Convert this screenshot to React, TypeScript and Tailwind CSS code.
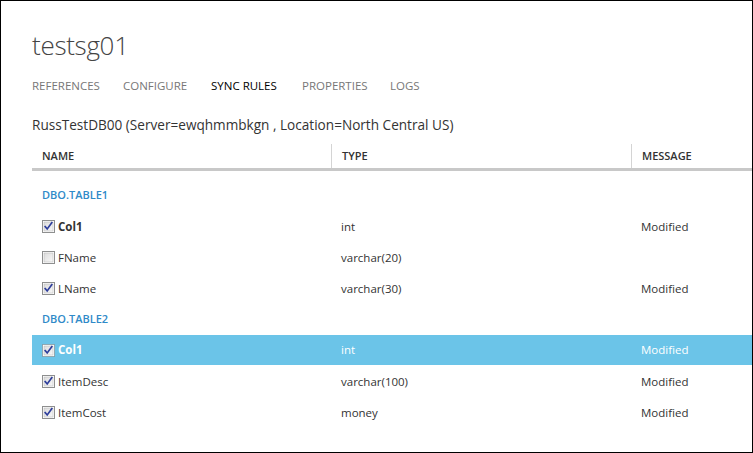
import React from "react";

type Row =
  | { kind: "section"; label: string }
  | { kind: "col"; name: string; type: string; msg: string; checked: boolean; bold?: boolean; selected?: boolean };

const rows: Row[] = [
  { kind: "section", label: "DBO.TABLE1" },
  { kind: "col", name: "Col1", type: "int", msg: "Modified", checked: true, bold: true },
  { kind: "col", name: "FName", type: "varchar(20)", msg: "", checked: false },
  { kind: "col", name: "LName", type: "varchar(30)", msg: "Modified", checked: true },
  { kind: "section", label: "DBO.TABLE2" },
  { kind: "col", name: "Col1", type: "int", msg: "Modified", checked: true, bold: true, selected: true },
  { kind: "col", name: "ItemDesc", type: "varchar(100)", msg: "Modified", checked: true },
  { kind: "col", name: "ItemCost", type: "money", msg: "Modified", checked: true },
];

function Check({ checked, selected }: { checked: boolean; selected?: boolean }) {
  return (
    <svg width="13" height="13" viewBox="0 0 13 13" className="shrink-0">
      <defs>
        <linearGradient id="cbg" x1="0" y1="0" x2="1" y2="1">
          <stop offset="0" stopColor="#dcdcdc" />
          <stop offset="1" stopColor="#f8f8f8" />
        </linearGradient>
      </defs>
      <rect x="0.5" y="0.5" width="12" height="12" fill="#fff" stroke={selected ? "#6f6f6f" : "#8e8f8f"} strokeDasharray={selected ? "1 1" : undefined} />
      <rect x="2" y="2" width="9" height="9" fill="url(#cbg)" stroke="#b5b5b5" strokeWidth="0.5" />
      {checked && (
        <path d="M3.2 6.6 L5.2 9 L9.8 2.8" fill="none" stroke="#2f3f9c" strokeWidth="1.7" strokeLinecap="square" />
      )}
    </svg>
  );
}

export default function App() {
  const font = { fontFamily: '"Open Sans", "Noto Sans", sans-serif' };
  return (
    <div className="w-[753px] h-[453px] border border-black bg-white overflow-hidden text-[#333]" style={font}>
      <div className="pl-[31px] pt-[24px]">
        <h1 className="text-[26px] font-light leading-[40px] text-[#444] tracking-[-0.3px]">testsg01</h1>
        <div className="flex mt-[11px] text-[11.5px] leading-[20px] uppercase text-[#777]">
          <span className="w-[91px]">References</span>
          <span className="w-[88px]">Configure</span>
          <span className="w-[91px] text-black">Sync Rules</span>
          <span className="w-[88px]">Properties</span>
          <span>Logs</span>
        </div>
        <div className="mt-[19px] text-[13.6px] leading-[20px] text-[#333]">
          RussTestDB00 (Server=ewqhmmbkgn , Location=North Central US)
        </div>
        <div className="mt-[9px]">
          <div className="grid grid-cols-[299px_300px_1fr] h-[24px] text-[11px] font-semibold text-[#333] uppercase">
            <div className="pl-[10px] flex items-center">Name</div>
            <div className="pl-[10px] flex items-center border-l border-[#d4d4d4]">Type</div>
            <div className="pl-[10px] flex items-center border-l border-[#d4d4d4]">Message</div>
          </div>
          <div className="h-[3px] bg-[#c8c8c8]" />
          <div className="pt-[9px] text-[11.5px]">
            {rows.map((r, i) =>
              r.kind === "section" ? (
                <div key={i} className="h-[31px] pl-[10px] flex items-center text-[#2f8ac8] font-semibold text-[11px]">
                  {r.label}
                </div>
              ) : (
                <div
                  key={i}
                  className={
                    "grid grid-cols-[299px_300px_1fr] items-center " +
                    (r.selected ? "h-[30px] mb-[1px] bg-[#6bc4e8] text-white" : "h-[31px]")
                  }
                >
                  <div className="pl-[10px] flex items-center gap-[3px]">
                    <Check checked={r.checked} selected={r.selected} />
                    <span className={r.bold ? "font-bold" : ""}>{r.name}</span>
                  </div>
                  <div className="pl-[10px]">{r.type}</div>
                  <div className="pl-[10px]">{r.msg}</div>
                </div>
              )
            )}
          </div>
        </div>
      </div>
    </div>
  );
}
